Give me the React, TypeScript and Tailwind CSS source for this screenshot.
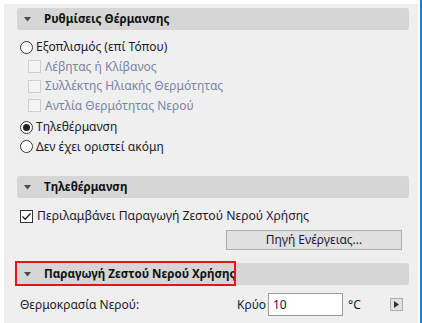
import React from "react";

const font = { fontFamily: '"Segoe UI", "Noto Sans", "Open Sans", sans-serif' };

function Header({ title, boxed }: { title: string; boxed?: boolean }) {
  return (
    <div className="relative h-[22px] rounded-[3px] bg-[#d6d6d6] flex items-center pl-[7px]">
      <svg width="7" height="5" viewBox="0 0 7 5" className="mr-[13px]">
        <polygon points="0,0 7,0 3.5,4.5" fill="#4a4a4a" />
      </svg>
      <span className="text-[11.6px] font-bold text-[#111]">{title}</span>
      {boxed && (
        <div className="absolute left-[-2px] top-[-2px] w-[221px] h-[25px] border-2 border-[#e8141b]" />
      )}
    </div>
  );
}

function Radio({ checked, label }: { checked?: boolean; label: string }) {
  return (
    <div className="flex items-center h-full">
      <div className="w-[13px] h-[13px] rounded-full border border-[#333] bg-white flex items-center justify-center ml-[3px] mr-[3px]">
        {checked && <div className="w-[7px] h-[7px] rounded-full bg-[#222]" />}
      </div>
      <span className="text-[12px] text-[#1a1a2e]">{label}</span>
    </div>
  );
}

function DisabledCheck({ label }: { label: string }) {
  return (
    <div className="flex items-center h-full pl-[11px]">
      <div className="w-[13px] h-[13px] border border-[#cfcfcf] bg-[#f4f4f4] mr-[4px]" />
      <span className="text-[12px] text-[#7a84a3]">{label}</span>
    </div>
  );
}

export default function App() {
  return (
    <div className="w-[422px] h-[323px] bg-white flex overflow-hidden" style={font}>
      <div className="ml-[4px] mt-[4px] w-[414px] h-[319px] bg-[#efefef] pl-[13px] pr-[9px] flex flex-col">
        <div className="mt-[4px]">
          <Header title="Ρυθμίσεις Θέρμανσης" />
        </div>
        <div className="h-[7px]" />
        <div className="h-[20px]"><Radio label="Εξοπλισμός (επί Τόπου)" /></div>
        <div className="h-[19px]"><DisabledCheck label="Λέβητας ή Κλίβανος" /></div>
        <div className="h-[20px]"><DisabledCheck label="Συλλέκτης Ηλιακής Θερμότητας" /></div>
        <div className="h-[19px]"><DisabledCheck label="Αντλία Θερμότητας Νερού" /></div>
        <div className="h-[2px]" />
        <div className="h-[20px]"><Radio checked label="Τηλεθέρμανση" /></div>
        <div className="h-[19px]"><Radio label="Δεν έχει οριστεί ακόμη" /></div>
        <div className="h-[20px]" />
        <Header title="Τηλεθέρμανση" />
        <div className="h-[8px]" />
        <div className="h-[20px] flex items-center">
          <div className="w-[13px] h-[13px] border border-[#333] bg-white ml-[3px] mr-[4px] flex items-center justify-center">
            <svg width="11" height="11" viewBox="0 0 11 11">
              <polyline points="1.5,5.5 4.2,8.3 9.5,2.5" fill="none" stroke="#222" strokeWidth="1.3" />
            </svg>
          </div>
          <span className="text-[12.2px] text-[#1a1a2e]">Περιλαμβάνει Παραγωγή Ζεστού Νερού Χρήσης</span>
        </div>
        <div className="h-[4px]" />
        <div className="flex justify-end pr-[7px]">
          <div className="w-[176px] h-[20px] bg-[#e1e1e1] border border-[#adadad] flex items-center justify-center text-[12px] text-[#1a1a2e]">
            Πηγή Ενέργειας...
          </div>
        </div>
        <div className="h-[13px]" />
        <Header title="Παραγωγή Ζεστού Νερού Χρήσης" boxed />
        <div className="h-[8px]" />
        <div className="h-[23px] flex items-center">
          <span className="text-[12px] text-[#1a1a2e] pl-[3px] w-[220px]">Θερμοκρασία Νερού:</span>
          <span className="text-[12px] text-[#1a1a2e] w-[31px]">Κρύο</span>
          <div className="w-[75px] h-[23px] bg-white border border-[#9a9a9a] flex items-center pl-[4px] text-[12px] text-[#1a1a2e]">10</div>
          <span className="text-[12px] text-[#1a1a2e] ml-[5px] w-[42px]">°C</span>
          <div className="w-[13px] h-[13px] bg-[#e1e1e1] border border-[#adadad] flex items-center justify-center">
            <svg width="5" height="7" viewBox="0 0 5 7"><polygon points="0,0 5,3.5 0,7" fill="#333" /></svg>
          </div>
        </div>
      </div>
      <div className="w-[2px] h-full bg-white" />
      <div className="w-[2px] h-full bg-[#1e7fd8]" />
    </div>
  );
}
